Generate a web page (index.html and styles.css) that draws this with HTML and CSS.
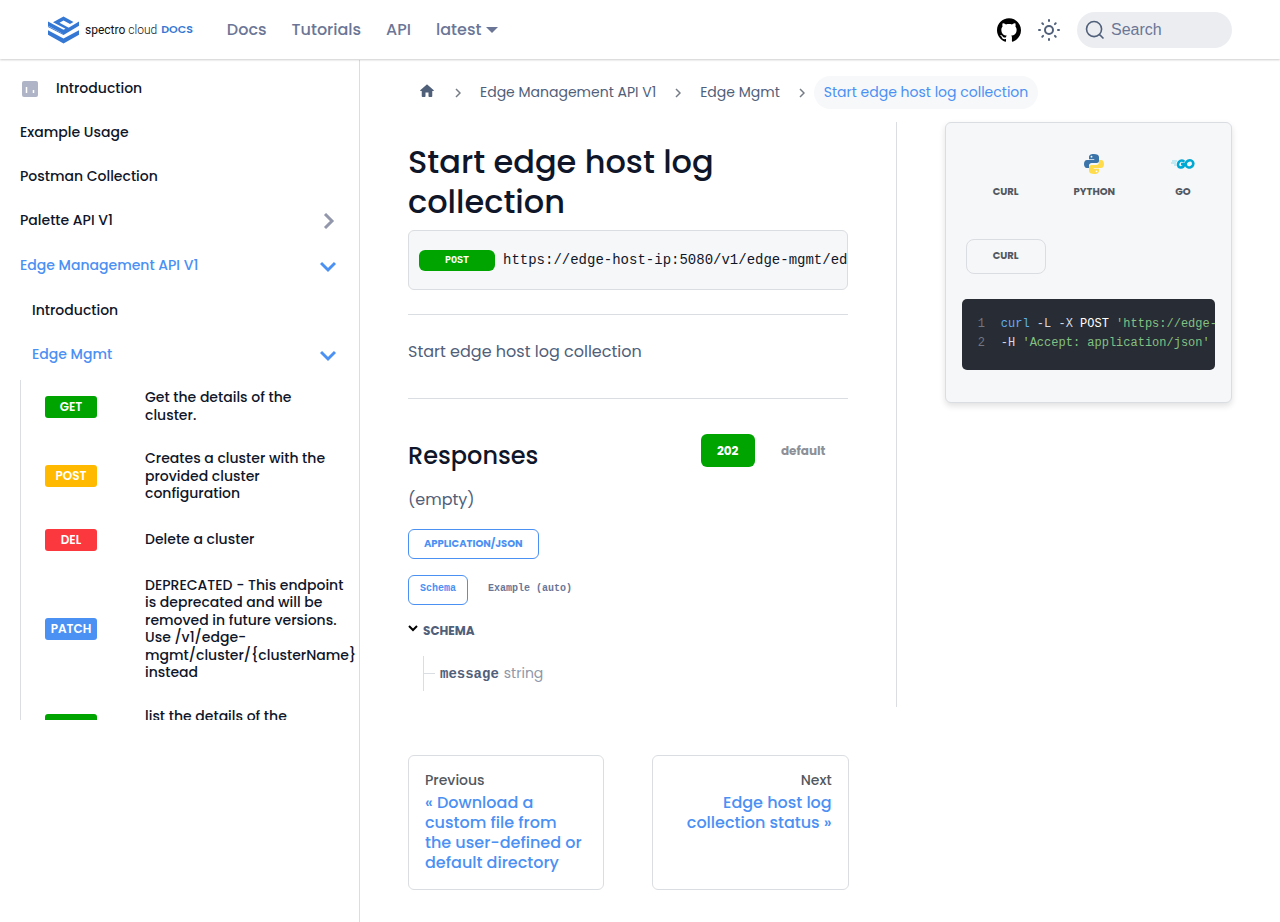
FILE: index.html
```html
<!DOCTYPE html>
<html lang="en">
<head>
<meta charset="utf-8">
<meta name="viewport" content="width=device-width, initial-scale=1">
<title>Start edge host log collection | Spectro Cloud</title>
<link rel="stylesheet" href="styles.css">
</head>
<body>
<header class="navbar">
  <a class="brand" href="#" aria-label="Spectro Cloud Docs">
    <svg class="brand-mark" viewBox="0 0 31 28" aria-hidden="true">
      <path fill="#3578d4" d="M15.500 .5 25.500 6 22 8 15.500 4.500 11.500 6.800 23.500 13.200 15.500 18 0 9.800V5.600L15.500 13.800 17.500 12.800 5 6.200z"/>
      <path fill="#3578d4" d="M31 5.600V9.800L15.500 19 0 11V10L15.500 18 13 16.200 21 11.600z"/>
      <path fill="#3578d4" d="M0 14.200 15.500 22.600 31 14.200V18.800L15.500 27.500 0 18.800z"/>
    </svg>
    <span class="brand-name">spectro <span class="thin">cloud</span></span>
    <span class="brand-docs">DOCS</span>
  </a>
  <nav class="top-links" aria-label="Main">
    <a href="#">Docs</a>
    <a href="#">Tutorials</a>
    <a href="#">API</a>
    <a class="version" href="#">latest</a>
  </nav>
  <div class="tools">
    <a class="github" href="#" aria-label="GitHub repository">
      <svg width="24" height="24" viewBox="0 0 24 24" aria-hidden="true"><path d="M12 .297c-6.630 0-12 5.373-12 12 0 5.303 3.438 9.800 8.205 11.385.6.113.82-.258.82-.577 0-.285-.01-1.040-.015-2.040-3.338.724-4.042-1.610-4.042-1.610C4.422 18.070 3.633 17.700 3.633 17.700c-1.087-.744.084-.729.084-.729 1.205.084 1.838 1.236 1.838 1.236 1.070 1.835 2.809 1.305 3.495.998.108-.776.417-1.305.76-1.605-2.665-.3-5.466-1.332-5.466-5.930 0-1.310.465-2.380 1.235-3.220-.135-.303-.54-1.523.105-3.176 0 0 1.005-.322 3.300 1.230.96-.267 1.980-.399 3-.405 1.020.006 2.040.138 3 .405 2.280-1.552 3.285-1.230 3.285-1.230.645 1.653.24 2.873.12 3.176.765.84 1.230 1.910 1.230 3.220 0 4.610-2.805 5.625-5.475 5.920.42.36.81 1.096.81 2.220 0 1.606-.015 2.896-.015 3.286 0 .315.21.69.825.57C20.565 22.092 24 17.592 24 12.297c0-6.627-5.373-12-12-12"/></svg>
    </a>
    <button class="theme" type="button" aria-label="Switch colour mode">
      <svg width="24" height="24" viewBox="0 0 24 24" aria-hidden="true"><g fill="none" stroke="#51607a" stroke-width="2"><circle cx="12" cy="12" r="4"/><path stroke-linecap="round" d="M12 2v1M12 21v1M2 12h1M21 12h1M5.300 5.300l.8.8M17.900 17.900l.8.8M5.300 18.700l.8-.8M17.900 6.100l.8-.8"/></g></svg>
    </button>
    <button class="search" type="button">
      <svg width="20" height="20" viewBox="0 0 20 20" aria-hidden="true"><path d="m14.386 14.386 4.088 4.088-4.088-4.088c-2.942 2.942-7.711 2.942-10.653 0-2.942-2.942-2.942-7.711 0-10.653 2.942-2.942 7.711-2.942 10.653 0 2.942 2.942 2.942 7.711 0 10.653z" fill="none" stroke="#51607a" stroke-width="1.600"/></svg>
      <span>Search</span>
    </button>
  </div>
</header>

<div class="page">
  <aside class="sidebar">
    <nav class="menu" aria-label="Docs sidebar">
      <a class="row with-icon" href="#">
        <svg width="20" height="20" viewBox="0 0 20 20" aria-hidden="true"><rect x="2" y="3" width="16" height="16" rx="2" fill="#afb4c6"/><path d="M6.500 9v6M13.500 12v3" stroke="#fff" stroke-width="1.500"/></svg>
        Introduction
      </a>
      <a class="row" href="#">Example Usage</a>
      <a class="row" href="#">Postman Collection</a>
      <a class="row category" href="#">Palette API V1
        <svg class="caret closed" width="16" height="16" viewBox="0 0 16 16" aria-hidden="true"><path d="M5 1l7 7-7 7"/></svg>
      </a>
      <a class="row category active" href="#">Edge Management API V1
        <svg class="caret" width="16" height="16" viewBox="0 0 16 16" aria-hidden="true"><path d="M1 5l7 7 7-7"/></svg>
      </a>
      <a class="row nested" href="#">Introduction</a>
      <a class="row category nested active" href="#">Edge Mgmt
        <svg class="caret" width="16" height="16" viewBox="0 0 16 16" aria-hidden="true"><path d="M1 5l7 7 7-7"/></svg>
      </a>
      <div class="tree">
        <a class="endpoint" href="#"><span class="method get">GET</span><span>Get the details of the<br>cluster.</span></a>
        <a class="endpoint" href="#"><span class="method post">POST</span><span>Creates a cluster with the<br>provided cluster<br>configuration</span></a>
        <a class="endpoint" href="#"><span class="method del">DEL</span><span>Delete a cluster</span></a>
        <a class="endpoint" href="#"><span class="method patch">PATCH</span><span>DEPRECATED - This endpoint<br>is deprecated and will be<br>removed in future versions.<br>Use /v1/edge-<br>mgmt/cluster/{clusterName}<br>instead</span></a>
        <a class="endpoint" href="#"><span class="method get">GET</span><span>list the details of the<br>clusters</span></a>
      </div>
    </nav>
  </aside>

  <main class="content">
    <nav class="crumbs" aria-label="Breadcrumbs">
      <a href="#" aria-label="Home page"><svg class="home" width="18" height="18" viewBox="0 0 24 24" aria-hidden="true"><path d="M10 19v-5h4v5c0 .55.45 1 1 1h3c.55 0 1-.45 1-1v-7h1.700c.46 0 .68-.57.33-.87L12.670 3.600c-.38-.34-.96-.34-1.340 0l-8.360 7.530c-.34.3-.13.87.33.87H5v7c0 .55.45 1 1 1h3c.55 0 1-.45 1-1z"/></svg></a>
      <svg class="sep" width="6" height="10" viewBox="0 0 6 10" aria-hidden="true"><path d="M1 1l4 4-4 4"/></svg>
      <a href="#">Edge Management API V1</a>
      <svg class="sep" width="6" height="10" viewBox="0 0 6 10" aria-hidden="true"><path d="M1 1l4 4-4 4"/></svg>
      <a href="#">Edge Mgmt</a>
      <svg class="sep" width="6" height="10" viewBox="0 0 6 10" aria-hidden="true"><path d="M1 1l4 4-4 4"/></svg>
      <span class="current">Start edge host log collection</span>
    </nav>

    <div class="columns">
      <article class="doc">
        <h1>Start edge host log collection</h1>
        <div class="endpoint-bar"><span class="verb">POST</span><code>https://edge-host-ip:5080/v1/edge-mgmt/edgehost/logs</code></div>
        <hr>
        <p class="summary">Start edge host log collection</p>
        <hr>
        <div class="responses-head">
          <h2>Responses</h2>
          <div class="codes"><button class="code on" type="button">202</button><button class="code wide" type="button">default</button></div>
        </div>
        <p class="empty">(empty)</p>
        <div class="tabs"><button class="tab mime on" type="button">APPLICATION/JSON</button></div>
        <div class="tabs"><button class="tab on" type="button">Schema</button><button class="tab" type="button">Example (auto)</button></div>
        <details open>
          <summary><svg width="10" height="12" viewBox="0 0 10 12" aria-hidden="true"><path d="M1 1l4 4 4-4" fill="none" stroke="#000" stroke-width="2"/></svg>SCHEMA</summary>
          <div class="schema"><strong>message</strong><span>string</span></div>
        </details>
      </article>

      <div class="side">
        <section class="card" aria-label="Code samples">
          <div class="langs">
            <button class="lang" type="button"><span class="pic"></span>CURL</button>
            <button class="lang" type="button"><span class="pic"><svg width="22" height="22" viewBox="0 0 22 22" aria-hidden="true">
              <path d="M10.800 1C7 1 6 2.500 6 4v2.200h5.300V7H4C2 7 1 8.700 1 11s1 4 2.800 4H6v-2.500C6 11 7.200 10 8.700 10h5c1.400 0 2.300-1 2.300-2.300V4c0-2-2-3-5.200-3z" fill="#3a74a8"/><circle cx="8.500" cy="3.700" r=".9" fill="#fff"/>
              <path d="M11.200 21c3.800 0 4.800-1.500 4.800-3v-2.200h-5.300V15H18c2 0 3-1.700 3-4s-1-4-2.800-4H16v2.500c0 1.500-1.200 2.500-2.700 2.500h-5C7 12 6 13 6 14.300V18c0 2 2 3 5.200 3z" fill="#ffdc4b"/><circle cx="13.500" cy="18.300" r=".9" fill="#fff"/></svg></span>PYTHON</button>
            <button class="lang" type="button"><span class="pic"><svg width="26" height="12" viewBox="0 0 26 12" aria-hidden="true"><path d="M2 3h5M1 5h5M4 7h2" stroke="#8fdcec" stroke-width="1"/><path d="M14.300 3.800C13.200 2.200 10.700 2 9 3.800 7.200 5.900 7.600 8.900 10.300 9.400c2 .3 3.600-1 4-3.400H11" fill="none" stroke="#00a9d4" stroke-width="2.600"/><ellipse cx="19.500" cy="5.900" rx="3.900" ry="3.500" fill="none" stroke="#00a9d4" stroke-width="2.600" transform="rotate(-25 19.500 5.900)"/></svg></span>GO</button>
          </div>
          <button class="variant" type="button">CURL</button>
          <pre class="sample"><span class="no">1</span><code><b>curl</b> -L -X <em>POST</em> <i>'https://edge-host-ip:5080/v1/edge-mgmt'</i></code>
<span class="no">2</span><code>-H <i>'Accept: application/json'</i></code></pre>
        </section>
      </div>
    </div>

    <nav class="pager" aria-label="Docs pages">
      <a href="#"><small>Previous</small>« Download a<br>custom file from<br>the user-defined or<br>default directory</a>
      <a class="next" href="#"><small>Next</small>Edge host log<br>collection status »</a>
    </nav>
  </main>
</div>
</body>
</html>
```
FILE: styles.css
```css
* { box-sizing: border-box; }
body {
  margin: 0;
  min-height: 100vh;
  display: flex;
  flex-direction: column;
  background: #fff;
  color: #51607a;
  font-family: Poppins, Inter, sans-serif;
  font-size: 16px;
}
a { color: inherit; text-decoration: none; }
button { font: inherit; color: inherit; border: 0; background: none; padding: 0; cursor: pointer; }
h1, h2, p { margin: 0; }

.navbar {
  display: flex;
  align-items: center;
  height: 59px;
  padding: 0 48px;
  box-shadow: 0 1px 2px rgba(0, 0, 0, .2);
  z-index: 1;
}
.brand { display: flex; align-items: center; margin-right: 34px; }
.brand-mark { width: 31px; height: 28px; margin-right: 6px; }
.brand-name { color: #111; font-family: Roboto, sans-serif; font-size: 12px; }
.thin { font-weight: 300; }
.brand-docs { margin-left: 4px; color: #3578d4; font-size: 11px; font-weight: 600; }
.top-links { display: flex; gap: 25px; color: #6b7696; font-weight: 500; }
.version { display: flex; align-items: center; gap: 5px; }
.version::after { content: ""; border: 6px solid transparent; border-top-color: #6b7696; border-bottom: 0; }
.tools { display: flex; align-items: center; margin-left: auto; }
.tools svg { display: block; }
.theme { margin: 0 16px; }
.search {
  display: flex;
  align-items: center;
  gap: 6px;
  width: 155px;
  height: 36px;
  padding: 0 8px;
  border-radius: 18px;
  background: #ebedf1;
  color: #6b7696;
  font-family: "Liberation Sans", Arial, sans-serif;
}

.page { display: flex; flex: 1; margin-top: 1px; }
.sidebar { width: 360px; flex: none; border-right: 1px solid #dadde1; }
.menu { max-height: 660px; overflow: hidden; margin-right: -1px; padding: 6px 20px 0; color: #0f1629; font-size: 14px; font-weight: 500; }
.row { display: flex; align-items: center; height: 44px; }
.with-icon { gap: 16px; }
.nested { padding-left: 12px; }
.category { height: 45px; justify-content: space-between; padding-right: 4px; }
.active { color: #4b90f3; }
.caret { fill: none; stroke: currentColor; stroke-width: 3; }
.closed { color: #9397ac; }
.tree { display: flex; flex-direction: column; gap: 26px; margin: 3px -20px 0 0; padding: 9px 0 13px 24px; border-left: 1px solid #dadde1; line-height: 1.25; }
.endpoint { display: flex; align-items: center; gap: 48px; white-space: nowrap; }
.method { flex: none; width: 52px; border-radius: 3px; color: #fff; font-size: 12px; font-weight: 600; line-height: 22px; text-align: center; }
.get { background: #00a400; }
.post { background: #ffba00; }
.del { background: #fa383e; }
.patch { background: #4b90f3; }

.content { flex: 1; min-width: 0; padding: 16px 0 32px; }
.crumbs { display: flex; align-items: center; padding: 0 48px; height: 33px; font-size: 14px; }
.home { display: block; margin: -3px 0 0 10px; fill: #51607a; }
.sep { margin: 0 19px; fill: none; stroke: #767c86; stroke-width: 1.500; }
.sep:nth-of-type(3) { margin-right: 9px; }
.current { padding: 0 10px; border-radius: 17px; background: #f6f8fa; color: #4b90f3; line-height: 33px; }

.columns { display: grid; grid-template-columns: 7fr 5fr; margin-top: 13px; }
.doc { min-width: 0; padding: 20px 48px 16px; border-right: 1px solid #dadde1; }
h1 { color: #0f1629; font-size: 32px; font-weight: 500; line-height: 40px; }
.endpoint-bar { display: flex; align-items: center; gap: 8px; height: 60px; margin-top: 8px; padding-left: 10px; overflow: hidden; border: 1px solid #dadde1; border-radius: 6px; background: #f6f7f9; color: #0f1629; }
.endpoint-bar code { font: 14px "Liberation Mono", monospace; white-space: nowrap; }
.verb { flex: none; width: 76px; border-radius: 6px; background: #00a400; color: #fff; font: bold 10px/21px "Liberation Mono", monospace; text-align: center; }
hr { margin: 24px 0; border: 0; border-top: 1px solid #dadde1; }
.summary { line-height: 26px; }
.summary + hr { margin: 33px 0 34px; }
.responses-head { display: flex; justify-content: space-between; align-items: center; height: 35px; }
h2 { padding-top: 10px; color: #0f1629; font-size: 24px; font-weight: 500; line-height: 35px; }
.code { min-width: 54px; border-radius: 6px; color: #8d9097; font-size: 12px; font-weight: 700; line-height: 33px; }
.wide { min-width: 81px; }
.codes { display: flex; gap: 8px; padding-right: 4px; }
.on.code { background: #00a400; color: #fff; }
.empty { margin-top: 19px; line-height: 26px; }
.tabs { display: flex; gap: 8px; margin-top: 16px; }
.tab { height: 30px; padding: 0 11px 3px; border: 1px solid transparent; border-radius: 6px; color: #6b7696; font: bold 10px "Liberation Mono", monospace; }
.on.tab { border-color: #4b90f3; color: #4b90f3; }
.tab.mime { padding: 0 15px 1px; font-family: Poppins, Inter, sans-serif; }
details { margin-top: 16px; }
summary { display: flex; align-items: center; gap: 5px; font-size: 12px; font-weight: 700; line-height: 20px; list-style: none; }
.schema { display: flex; align-items: center; gap: 5px; height: 35px; margin: 15px 0 0 15px; border-left: 1px solid #dadde1; color: #8f97a8; font-size: 14px; }
.schema::before { content: ""; width: 11px; border-top: 1px solid #dadde1; }
.schema strong { color: #51607a; font-family: "Liberation Mono", monospace; }

.side { min-width: 0; padding: 0 48px; }
.card { padding: 16px; border: 1px solid #dadde1; border-radius: 6px; background: #f6f7f9; box-shadow: 0 3px 6px rgba(0, 0, 0, .12); }
.langs { display: flex; justify-content: space-between; gap: 8px; margin: 8px -8px 0 4px; }
.lang { flex: none; width: 80px; color: #525860; font-size: 10px; font-weight: 700; line-height: 22px; }
.pic { display: flex; align-items: center; justify-content: center; height: 34px; }
.variant { display: block; width: 80px; height: 35px; margin: 36px 0 25px 4px; padding-bottom: 2px; border: 1px solid #dadde1; border-radius: 8px; color: #525860; font-size: 10px; font-weight: 700; }
.sample { margin: 0 0 16px; padding: 16px 16px 17px; overflow: hidden; border-radius: 5px; background: #282c34; color: #d4d9e2; font: 12px/19px "Liberation Mono", monospace; }
.sample code { font: inherit; }
.no { display: inline-block; margin-right: 16px; color: #717681; }
.sample b { color: #61aeee; font-weight: 400; }
.sample em { color: #fff; font-style: normal; }
.sample i { color: #82c183; font-style: normal; }

.pager { display: grid; grid-template-columns: 1fr 1fr; gap: 48px; width: calc(700% / 12); margin-top: 48px; padding: 0 48px; color: #4b90f3; font-weight: 500; line-height: 20px; }
.pager a { padding: 16px; border: 1px solid #dadde1; border-radius: 6px; white-space: nowrap; }
.pager small { display: block; margin-bottom: 4px; color: #525860; font-size: 14px; line-height: 17px; }
.next { text-align: right; }
```
